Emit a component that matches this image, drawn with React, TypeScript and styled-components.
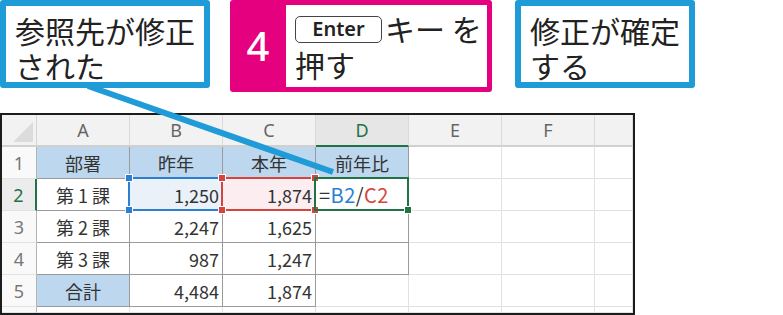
import React from "react";
import styled, { createGlobalStyle } from "styled-components";

const BLUE_FILL = "#bdd7ee";
const SEL_BLUE = "#2b7fd3";
const SEL_RED = "#d6453d";
const XL_GREEN = "#217346";
const CALLOUT_BLUE = "#1f9bd8";
const PINK = "#e4007f";

const GlobalStyle = createGlobalStyle`
  html, body {
    margin: 0;
    padding: 0;
    background: #fff;
  }
  body {
    font-family: "Noto Sans CJK JP", "Noto Sans", sans-serif;
  }
`;

const Page = styled.div`
  position: relative;
  width: 783px;
  height: 315px;
  overflow: hidden;
  background: #fff;
`;

const CalloutRow = styled.div`
  display: flex;
  align-items: flex-start;
  height: 113px;
`;

const NoteBox = styled.div<{ $width: number; $gap: number }>`
  position: relative;
  z-index: 2;
  box-sizing: border-box;
  width: ${(p) => p.$width}px;
  height: 88px;
  margin-left: ${(p) => p.$gap}px;
  padding: 7px 0 0 9px;
  border: 6px solid ${CALLOUT_BLUE};
  border-radius: 3px;
  background: #fff;
  color: #222;
  font-size: 30px;
  line-height: 35px;
  white-space: nowrap;
`;

const StepBox = styled.div`
  position: relative;
  z-index: 2;
  box-sizing: border-box;
  display: flex;
  width: 262px;
  height: 92px;
  margin-left: 20px;
  padding: 5px 5px 5px 0;
  border-radius: 3px;
  background: ${PINK};
`;

const StepNumber = styled.div`
  display: flex;
  align-items: center;
  justify-content: center;
  width: 56px;
  padding-bottom: 2px;
  color: #fff;
  font-family: "Noto Sans", sans-serif;
  font-size: 40px;
  font-weight: 500;
`;

const StepBody = styled.div`
  flex: 1;
  padding: 5px 0 0 9px;
  background: #fff;
  color: #222;
  font-size: 30px;
  line-height: 36px;
  white-space: nowrap;
`;

const KeyCap = styled.span`
  display: inline-flex;
  align-items: center;
  justify-content: center;
  box-sizing: border-box;
  width: 87px;
  height: 27px;
  margin-right: 3px;
  padding-bottom: 1px;
  border: 1.5px solid #444;
  border-radius: 5px;
  font-family: "Noto Sans", sans-serif;
  font-size: 20px;
  font-weight: 600;
  line-height: 1;
  vertical-align: 5px;
`;

const Pointer = styled.svg`
  position: absolute;
  left: 0;
  top: 0;
  z-index: 1;
  pointer-events: none;
`;

const Sheet = styled.div`
  box-sizing: border-box;
  display: grid;
  grid-template-columns: 35px repeat(6, 93px) 1fr;
  grid-template-rows: repeat(6, 32px) 1fr;
  width: 635px;
  height: 202px;
  border: 2px solid #1c1c1c;
  overflow: hidden;
  color: #333;
`;

const Corner = styled.div`
  position: relative;
  background: #f2f2f2;
  border-right: 1px solid #d6d6d6;
  border-bottom: 2px solid #d0d0d0;

  &::after {
    content: "";
    position: absolute;
    right: 3px;
    bottom: 3px;
    width: 20px;
    height: 20px;
    background: #dcdcdc;
    clip-path: polygon(100% 0, 100% 100%, 0 100%);
  }
`;

const ColHead = styled.div<{ $active?: boolean }>`
  display: flex;
  align-items: center;
  justify-content: center;
  background: ${(p) => (p.$active ? "#e6e6e6" : "#f2f2f2")};
  border-right: 1px solid #dadada;
  border-bottom: 2px solid ${(p) => (p.$active ? XL_GREEN : "#d0d0d0")};
  color: ${(p) => (p.$active ? XL_GREEN : "#666")};
  font-family: "Noto Sans", sans-serif;
  font-size: 18px;
`;

const RowHead = styled.div<{ $active?: boolean }>`
  display: flex;
  align-items: center;
  justify-content: center;
  background: ${(p) => (p.$active ? "#ececec" : "#f9f9f9")};
  border-right: ${(p) => (p.$active ? `2px solid ${XL_GREEN}` : "1px solid #b4b4b4")};
  border-bottom: 1px solid #e2e2e2;
  color: ${(p) => (p.$active ? XL_GREEN : "#777")};
  font-family: "Noto Sans", sans-serif;
  font-size: 18px;
`;

const Cell = styled.div<{ $align: string; $fill: string; $boxed?: boolean }>`
  position: relative;
  display: flex;
  align-items: center;
  justify-content: ${(p) =>
    p.$align === "right" ? "flex-end" : p.$align === "center" ? "center" : "flex-start"};
  padding: 0 3px;
  background: ${(p) => p.$fill};
  border-right: 1px solid ${(p) => (p.$boxed ? "#9a9a9a" : "#e2e2e2")};
  border-bottom: 1px solid ${(p) => (p.$boxed ? "#9a9a9a" : "#e2e2e2")};
  font-size: 18px;
  white-space: nowrap;
`;

const Frame = styled.div<{ $color: string }>`
  position: absolute;
  z-index: 1;
  top: -2px;
  left: -2px;
  right: -1px;
  bottom: -1px;
  border: 2px solid ${(p) => p.$color};
  pointer-events: none;
`;

const Handle = styled.span<{ $color: string; $x: "left" | "right"; $y: "top" | "bottom" }>`
  position: absolute;
  ${(p) => p.$x}: -5px;
  ${(p) => p.$y}: -5px;
  width: 6px;
  height: 6px;
  background: ${(p) => p.$color};
  border: 1px solid #fff;
`;

const Formula = styled.span`
  font-size: 20px;
  letter-spacing: 0.5px;
`;

const Ref = styled.span<{ $color: string }>`
  color: ${(p) => p.$color};
`;

type Frame = "blue" | "red" | "green";

type CellDef = {
  text?: React.ReactNode;
  align?: "left" | "center" | "right";
  fill?: string;
  boxed?: boolean;
  frame?: Frame;
};

const frameColor: Record<Frame, string> = {
  blue: SEL_BLUE,
  red: SEL_RED,
  green: XL_GREEN,
};

const columns = ["A", "B", "C", "D", "E", "F", ""];

const formula = (
  <Formula>
    =<Ref $color={SEL_BLUE}>B2</Ref>/<Ref $color={SEL_RED}>C2</Ref>
  </Formula>
);

const head = (text: string): CellDef => ({ text, align: "center", fill: BLUE_FILL, boxed: true });
const num = (text: string): CellDef => ({ text, align: "right", boxed: true });

const rows: CellDef[][] = [
  [head("部署"), head("昨年"), head("本年"), head("前年比")],
  [
    { text: "第 1 課", align: "center", boxed: true },
    { ...num("1,250"), fill: "#eaf1f9", frame: "blue" },
    { ...num("1,874"), fill: "#fcedf0", frame: "red" },
    { text: formula, align: "left", boxed: true, frame: "green" },
  ],
  [{ text: "第 2 課", align: "center", boxed: true }, num("2,247"), num("1,625"), { boxed: true }],
  [{ text: "第 3 課", align: "center", boxed: true }, num("987"), num("1,247"), { boxed: true }],
  [head("合計"), num("4,484"), num("1,874")],
  [],
];

const SelectionFrame = ({ kind }: { kind: Frame }) => {
  const color = frameColor[kind];
  if (kind === "green") {
    return (
      <Frame $color={color}>
        <Handle $color={color} $x="right" $y="bottom" />
      </Frame>
    );
  }
  return (
    <Frame $color={color}>
      <Handle $color={color} $x="left" $y="top" />
      <Handle $color={color} $x="right" $y="top" />
      <Handle $color={color} $x="left" $y="bottom" />
      <Handle $color={color} $x="right" $y="bottom" />
    </Frame>
  );
};

const App = () => {
  return (
    <Page>
      <GlobalStyle />
      <CalloutRow>
        <NoteBox $width={210} $gap={0}>
          参照先が修正
          <br />
          された
        </NoteBox>
        <StepBox>
          <StepNumber>4</StepNumber>
          <StepBody>
            <KeyCap>Enter</KeyCap>キー を
            <br />
            押す
          </StepBody>
        </StepBox>
        <NoteBox $width={180} $gap={23}>
          修正が確定
          <br />
          する
        </NoteBox>
      </CalloutRow>

      <Pointer width={783} height={315}>
        <line x1={88} y1={86} x2={333} y2={172} stroke={CALLOUT_BLUE} strokeWidth={6} />
      </Pointer>

      <Sheet>
        <Corner />
        {columns.map((c, i) => (
          <ColHead key={i} $active={c === "D"}>
            {c}
          </ColHead>
        ))}
        {rows.map((row, r) => (
          <React.Fragment key={r}>
            <RowHead $active={r === 1}>{r < 5 ? r + 1 : ""}</RowHead>
            {columns.map((_, c) => {
              const cell = row[c] ?? {};
              return (
                <Cell
                  key={c}
                  $align={cell.align ?? "left"}
                  $fill={cell.fill ?? "#fff"}
                  $boxed={cell.boxed}
                >
                  {cell.text}
                  {cell.frame && <SelectionFrame kind={cell.frame} />}
                </Cell>
              );
            })}
          </React.Fragment>
        ))}
      </Sheet>
    </Page>
  );
};

export default App;
